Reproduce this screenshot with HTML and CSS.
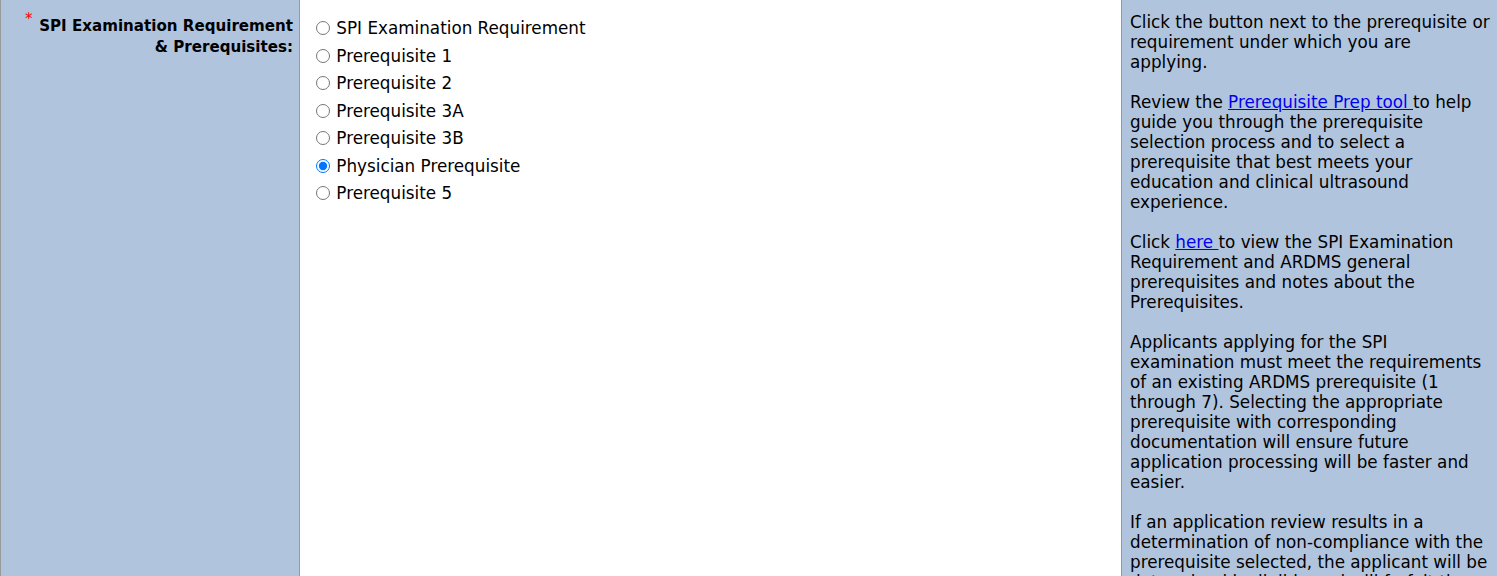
FILE: index.html
```html
<!DOCTYPE html>
<html lang="en">
<head>
  <meta charset="UTF-8">
  <title>SPI Examination Requirement</title>
  <link rel="stylesheet" href="styles.css">
</head>
<body>
  <div class="form-row">
    <div class="label-cell">
      <span class="required">*</span>
      <label>SPI Examination Requirement<br>&amp; Prerequisites:</label>
    </div>

    <div class="field-cell">
      <ul class="options">
        <li><label><input type="radio" name="prereq" value="spi"> SPI Examination Requirement</label></li>
        <li><label><input type="radio" name="prereq" value="p1"> Prerequisite 1</label></li>
        <li><label><input type="radio" name="prereq" value="p2"> Prerequisite 2</label></li>
        <li><label><input type="radio" name="prereq" value="p3a"> Prerequisite 3A</label></li>
        <li><label><input type="radio" name="prereq" value="p3b"> Prerequisite 3B</label></li>
        <li><label><input type="radio" name="prereq" value="phys" checked> Physician Prerequisite</label></li>
        <li><label><input type="radio" name="prereq" value="p5"> Prerequisite 5</label></li>
      </ul>
    </div>

    <div class="help-cell">
      Click the button next to the prerequisite or requirement under which you are applying.<br><br>
      Review the <a href="#">Prerequisite Prep tool&nbsp;</a>to help guide you through the prerequisite selection process and to select a prerequisite that best meets your education and clinical ultrasound experience.<br><br>
      Click <a href="#">here&nbsp;</a>to view the SPI Examination Requirement and ARDMS general prerequisites and notes about the Prerequisites.<br><br>
      Applicants applying for the SPI examination must meet the requirements of an existing ARDMS prerequisite (1 through 7). Selecting the appropriate prerequisite with corresponding documentation will ensure future application processing will be faster and easier.<br><br>
      If an application review results in a determination of non-compliance with the prerequisite selected, the applicant will be determined ineligible and will forfeit the fees paid.
    </div>
  </div>
</body>
</html>
```

FILE: styles.css
```css
body {
  margin: 0;
  font-family: Verdana, "DejaVu Sans", sans-serif;
  font-size: 16.8px;
  color: #000;
  background: #fff;
  overflow: hidden;
}

.form-row {
  display: grid;
  grid-template-columns: 300px 822px 1fr;
  min-height: 576px;
}

.label-cell {
  background: #b0c4de;
  border-left: 1px solid #999;
  border-right: 1px solid #999;
  padding: 15px 6px 0 0;
  text-align: right;
  position: relative;
}

.label-cell label {
  font-weight: bold;
  font-size: 15.1px;
  line-height: 20px;
}

.required {
  position: absolute;
  left: 24px;
  top: 10px;
  color: red;
  font-size: 15px;
}

.field-cell {
  background: #fff;
  border-right: 1px solid #999;
  padding: 14px 0 0 15px;
}

.options {
  list-style: none;
  margin: 0;
  padding: 0;
}

.options li {
  height: 27.5px;
  line-height: 28px;
}

.options input {
  margin: 0 1px 0 1px;
  width: 14px;
  height: 14px;
  vertical-align: -1px;
}

.help-cell {
  background: #b0c4de;
  padding: 12px 4px 0 8px;
  line-height: 20px;
}

.help-cell a {
  color: #00e;
}
```
